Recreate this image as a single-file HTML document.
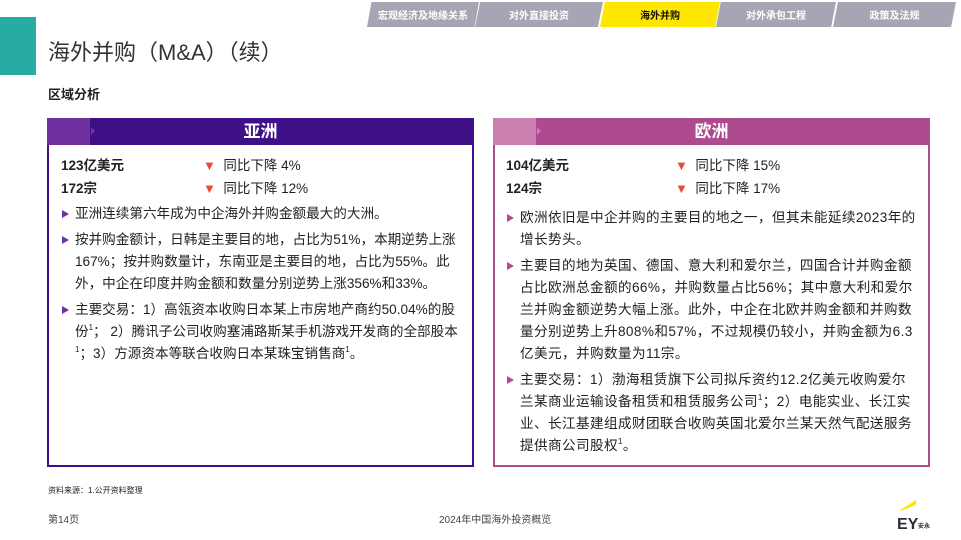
<!DOCTYPE html>
<html><head><meta charset="utf-8"><style>
*{margin:0;padding:0;box-sizing:border-box}
body{width:961px;height:540px;background:#fff;position:relative;overflow:hidden;font-family:"Liberation Sans","Noto Sans CJK SC",sans-serif;color:#222}
.a{position:absolute}
.tab{position:absolute;top:2px;height:25px;background:#a7a5b3;color:#fff;font-size:10px;font-weight:bold;display:flex;align-items:center;justify-content:center;clip-path:polygon(4% 0,100% 0,96% 100%,0 100%)}
.hd{position:absolute;height:27px;color:#fff;font-size:17px;font-weight:bold;text-align:center;line-height:27px}
.box{position:absolute;top:145px;height:322px;border:2px solid;border-top:none}
.row{position:absolute;font-size:13.5px}
.tri{color:#e8493b;font-size:13px}
ul{list-style:none;position:absolute;font-size:13.6px;line-height:22px}
li{position:relative;margin-bottom:4px}
.b{position:absolute;left:-13px;top:7px;border-left:7px solid;border-top:4px solid transparent;border-bottom:4px solid transparent}
sup{font-size:8px;vertical-align:6px;line-height:0}
</style></head><body>
<div class="tab" style="left:367px;width:112px">宏观经济及地缘关系</div>
<div class="tab" style="left:475px;width:128px">对外直接投资</div>
<div class="tab" style="left:600px;width:120px;background:#ffe600;color:#111">海外并购</div>
<div class="tab" style="left:716px;width:120px">对外承包工程</div>
<div class="tab" style="left:833px;width:123px">政策及法规</div>
<div class="a" style="left:0;top:17px;width:36px;height:58px;background:#27aca5"></div>
<div class="a" style="left:48px;top:35px;font-size:22px;color:#333">海外并购（M&amp;A）（续）</div>
<div class="a" style="left:48px;top:84px;font-size:13px;font-weight:bold">区域分析</div>

<div class="hd" style="left:47px;top:118px;width:427px;background:#3f0f87">亚洲</div>
<div class="a" style="left:47px;top:118px;width:43px;height:27px;background:#7030a0"></div>
<div class="a" style="left:91px;top:127px;border-left:4px solid #7030a0;border-top:4px solid transparent;border-bottom:4px solid transparent"></div>
<div class="box" style="left:47px;width:427px;border-color:#3f0f87"></div>
<div class="row" style="left:61px;top:154px;font-weight:bold">123亿美元</div>
<div class="row" style="left:61px;top:177px;font-weight:bold">172宗</div>
<div class="row" style="left:203px;top:154px"><span class="tri">▼</span>&nbsp; 同比下降 4%</div>
<div class="row" style="left:203px;top:177px"><span class="tri">▼</span>&nbsp; 同比下降 12%</div>
<ul style="left:75px;top:203px;width:392px">
<li><span class="b" style="border-left-color:#7030a0"></span>亚洲连续第六年成为中企海外并购金额最大的大洲。</li>
<li><span class="b" style="border-left-color:#7030a0"></span>按并购金额计，日韩是主要目的地，占比为51%，本期逆势上涨167%；按并购数量计，东南亚是主要目的地，占比为55%。此外，中企在印度并购金额和数量分别逆势上涨356%和33%。</li>
<li><span class="b" style="border-left-color:#7030a0"></span>主要交易：1）高瓴资本收购日本某上市房地产商约50.04%的股<br>份<sup>1</sup>； 2）腾讯子公司收购塞浦路斯某手机游戏开发商的全部股本<br><sup>1</sup>；3）方源资本等联合收购日本某珠宝销售商<sup>1</sup>。</li>
</ul>

<div class="hd" style="left:493px;top:118px;width:437px;background:#ae4a8f">欧洲</div>
<div class="a" style="left:493px;top:118px;width:43px;height:27px;background:#c980b0"></div>
<div class="a" style="left:537px;top:127px;border-left:4px solid #c980b0;border-top:4px solid transparent;border-bottom:4px solid transparent"></div>
<div class="box" style="left:493px;width:437px;border-color:#ae4a8f"></div>
<div class="row" style="left:506px;top:154px;font-weight:bold">104亿美元</div>
<div class="row" style="left:506px;top:177px;font-weight:bold">124宗</div>
<div class="row" style="left:675px;top:154px"><span class="tri">▼</span>&nbsp; 同比下降 15%</div>
<div class="row" style="left:675px;top:177px"><span class="tri">▼</span>&nbsp; 同比下降 17%</div>
<ul style="left:520px;top:207px;width:408px;letter-spacing:0.4px">
<li><span class="b" style="border-left-color:#ae4a8f"></span>欧洲依旧是中企并购的主要目的地之一，但其未能延续2023年的<br>增长势头。</li>
<li><span class="b" style="border-left-color:#ae4a8f"></span>主要目的地为英国、德国、意大利和爱尔兰，四国合计并购金额<br>占比欧洲总金额的66%，并购数量占比56%；其中意大利和爱尔<br>兰并购金额逆势大幅上涨。此外，中企在北欧并购金额和并购数<br>量分别逆势上升808%和57%，不过规模仍较小，并购金额为6.3<br>亿美元，并购数量为11宗。</li>
<li><span class="b" style="border-left-color:#ae4a8f"></span>主要交易：1）渤海租赁旗下公司拟斥资约12.2亿美元收购爱尔<br>兰某商业运输设备租赁和租赁服务公司<sup>1</sup>；2）电能实业、长江实<br>业、长江基建组成财团联合收购英国北爱尔兰某天然气配送服务<br>提供商公司股权<sup>1</sup>。</li>
</ul>

<div class="a" style="left:48px;top:485px;font-size:8px">资料来源：1.公开资料整理</div>
<div class="a" style="left:48px;top:511px;font-size:10px;color:#444">第14页</div>
<div class="a" style="left:439px;top:511px;font-size:10px;color:#444">2024年中国海外投资概览</div>
<svg class="a" style="left:896px;top:500px" width="36" height="30" viewBox="0 0 36 30">
<polygon points="4,10 20,0 20,5 4,11" fill="#ffe600"/>
<text x="1" y="29" font-family="Liberation Sans" font-weight="bold" font-size="16" fill="#2e2e38">EY</text>
<text x="22" y="28" font-family="Noto Sans CJK SC" font-weight="bold" font-size="6" fill="#2e2e38">安永</text>
</svg>
</body></html>
